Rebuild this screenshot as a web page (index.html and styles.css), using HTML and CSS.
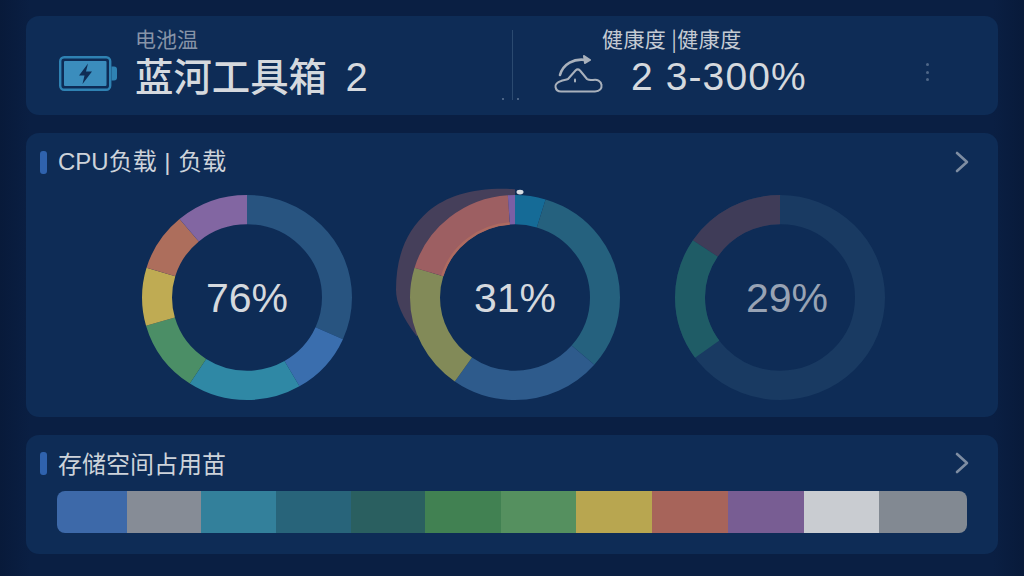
FILE: index.html
```html
<!DOCTYPE html>
<html lang="zh-CN">
<head>
  <meta charset="UTF-8">
  <meta name="viewport" content="width=device-width, initial-scale=1.0">
  <title>蓝河工具箱</title>
  <link rel="stylesheet" href="styles.css">
</head>
<body>
  <section class="card top-card">
    <div class="stat stat-left">
      <svg class="battery" width="58" height="35" viewBox="0 0 58 35">
        <rect x="1.2" y="1.2" width="50" height="32.6" rx="4" fill="none" stroke="#2f82b3" stroke-width="2.4"/>
        <rect x="5" y="5" width="42.5" height="25" rx="1" fill="#3b8dbd"/>
        <path d="M52.5 10.5h2.5a3 3 0 0 1 3 3v8a3 3 0 0 1-3 3h-2.5z" fill="#2f82b3"/>
        <path d="M29 7.5 20 19.5h5.5L23.5 28 33 15.5h-6z" fill="#0f2d55"/>
      </svg>
      <div class="stat-text">
        <div class="stat-label dim">电池温</div>
        <div class="stat-value cjk">蓝河工具箱 <span class="num">2</span></div>
      </div>
    </div>
    <div class="divider"></div>
    <div class="stat stat-right">
      <svg class="cloud" width="49" height="38" viewBox="0 0 49 38" fill="none" stroke="#a9b1bc" stroke-width="2" stroke-linecap="round" stroke-linejoin="round">
        <path d="M7 36.5H41C46 36.5 48 33 47.5 30 47 26 43 24 39 25 36 25 34 25 33 24L26 15.500C24.500 14 23 14 21.500 15.500L14 24C12 25 9 25 7 26 3 27 1 30 1.500 32 2 35 4 36.500 7 36.500Z"/>
        <path d="M6 20C9 9 20 3 32 5" stroke-width="2.6"/>
        <path d="M30 1 36 5 31 8z" fill="#a9b1bc"/>
        <path d="M21 26.500v-2"/>
      </svg>
      <div class="stat-text">
        <div class="stat-label wide">健康度 |健康度</div>
        <div class="stat-value num indent">2 3-300%</div>
      </div>
      <div class="kebab"><i></i><i></i><i></i></div>
    </div>
  </section>

  <section class="card cpu-card">
    <div class="card-head">
      <span class="accent"></span>
      <h2 class="spaced">CPU负载 | 负载</h2>
      <svg class="chevron" width="14" height="22" viewBox="0 0 14 22"><path d="M2 2l10 9-10 9" fill="none" stroke="#7e8da2" stroke-width="2.600" stroke-linecap="round" stroke-linejoin="round"/></svg>
    </div>
    <div class="donuts">
      <div class="donut">
        <svg width="210" height="205" viewBox="0 0 210 210" preserveAspectRatio="none">
          <g transform="rotate(-90 105 105)" fill="none" stroke-width="30">
            <circle cx="105" cy="105" r="90" pathLength="360" stroke="#285480" stroke-dasharray="114 246"/>
            <circle cx="105" cy="105" r="90" pathLength="360" stroke="#3a6eae" stroke-dasharray="36 324" stroke-dashoffset="-114"/>
            <circle cx="105" cy="105" r="90" pathLength="360" stroke="#2f88a5" stroke-dasharray="63 297" stroke-dashoffset="-150"/>
            <circle cx="105" cy="105" r="90" pathLength="360" stroke="#4b8e66" stroke-dasharray="41 319" stroke-dashoffset="-213"/>
            <circle cx="105" cy="105" r="90" pathLength="360" stroke="#bfab53" stroke-dasharray="33 327" stroke-dashoffset="-254"/>
            <circle cx="105" cy="105" r="90" pathLength="360" stroke="#ad6e5c" stroke-dasharray="33 327" stroke-dashoffset="-287"/>
            <circle cx="105" cy="105" r="90" pathLength="360" stroke="#8266a2" stroke-dasharray="40 320" stroke-dashoffset="-320"/>
          </g>
        </svg>
        <span class="pct">76%</span>
      </div>
      <div class="donut">
        <svg width="210" height="205" viewBox="0 0 210 210" preserveAspectRatio="none">
          <path d="M7 145C-8 125-14 110-14 97-14 60-2 35 18 17 38 0 65-8 105-6V17A88 88 0 0 0 17 105Z" fill="#453f5a"/>
          <g transform="rotate(-90 105 105)" fill="none" stroke-width="30">
            <circle cx="105" cy="105" r="90" pathLength="360" stroke="#156b97" stroke-dasharray="17 343"/>
            <circle cx="105" cy="105" r="90" pathLength="360" stroke="#25617e" stroke-dasharray="114 246" stroke-dashoffset="-17"/>
            <circle cx="105" cy="105" r="90" pathLength="360" stroke="#2e5b8c" stroke-dasharray="84 276" stroke-dashoffset="-131"/>
            <circle cx="105" cy="105" r="90" pathLength="360" stroke="#828a58" stroke-dasharray="72 288" stroke-dashoffset="-215"/>
            <circle cx="105" cy="105" r="90" pathLength="360" stroke="#9d5f62" stroke-dasharray="69 291" stroke-dashoffset="-287"/>
            <circle cx="105" cy="105" r="90" pathLength="360" stroke="#7a5fa5" stroke-dasharray="4 356" stroke-dashoffset="-356"/>
            <circle cx="105" cy="105" r="76" pathLength="360" stroke="#ad6a60" stroke-width="2.500" stroke-dasharray="69 291" stroke-dashoffset="-287"/>
          </g>
          <ellipse cx="110" cy="-3" rx="3.500" ry="2.500" fill="#d8dde2"/>
        </svg>
        <span class="pct">31%</span>
      </div>
      <div class="donut faded">
        <svg width="210" height="205" viewBox="0 0 210 210" preserveAspectRatio="none">
          <g transform="rotate(-90 105 105)" fill="none" stroke-width="30">
            <circle cx="105" cy="105" r="90" pathLength="360" stroke="#193a62"/>
            <circle cx="105" cy="105" r="90" pathLength="360" stroke="#1f5c66" stroke-dasharray="70 290" stroke-dashoffset="-234"/>
            <circle cx="105" cy="105" r="90" pathLength="360" stroke="#3f3c58" stroke-dasharray="56 304" stroke-dashoffset="-304"/>
          </g>
        </svg>
        <span class="pct">29%</span>
      </div>
    </div>
  </section>

  <section class="card storage-card">
    <div class="card-head">
      <span class="accent"></span>
      <h2>存储空间占用苗</h2>
      <svg class="chevron" width="14" height="22" viewBox="0 0 14 22"><path d="M2 2l10 9-10 9" fill="none" stroke="#7e8da2" stroke-width="2.600" stroke-linecap="round" stroke-linejoin="round"/></svg>
    </div>
    <div class="bar">
      <span class="seg s1"></span>
      <span class="seg s2"></span>
      <span class="seg s3"></span>
      <span class="seg s4"></span>
      <span class="seg s5"></span>
      <span class="seg s6"></span>
      <span class="seg s7"></span>
      <span class="seg s8"></span>
      <span class="seg s9"></span>
      <span class="seg s10"></span>
      <span class="seg s11"></span>
      <span class="seg s12"></span>
    </div>
  </section>
</body>
</html>
```

FILE: styles.css
```css
* { box-sizing: border-box; }
html, body { height: 100%; }
body { margin: 0; padding: 16px 26px 0; display: flex; flex-direction: column; gap: 18px; background: linear-gradient(90deg, #081a3a, #0a1f43 3%, #0a1f43 97%, #081a3a); overflow: hidden; font-family: "Liberation Sans", "Noto Sans CJK SC", sans-serif; color: #d5d9de; }
.card { background: #0e2c56; border-radius: 13px; }

.top-card { height: 99px; display: flex; }
.stat { display: flex; align-items: flex-end; height: 80px; padding-top: 10px; }
.stat-left { width: 486px; padding-left: 33px; gap: 18px; }
.stat-right { flex: 1; padding-left: 41px; padding-right: 69px; }
.battery { margin-bottom: 5px; flex: none; }
.cloud { margin-bottom: 3px; flex: none; }
.stat-text { display: flex; flex-direction: column; }
.stat-label { font-family: "Noto Sans CJK SC", sans-serif; font-size: 21px; line-height: 24px; height: 26px; color: #c5cbd3; }
.stat-label.dim { color: #8794a8; }
.stat-label.wide { letter-spacing: 0.4px; margin-left: -1px; }
.stat-value { font-size: 38.4px; line-height: 44px; height: 44px; color: #d5d9de; white-space: pre; }
.stat-value.cjk { font-family: "Noto Sans CJK SC", sans-serif; font-weight: 500; }
.stat-value.cjk .num { font-size: 40px; margin-left: 10px; }
.num { font-family: "Liberation Sans", sans-serif; font-weight: 400; }
.indent { margin-left: 28px; font-size: 39px; letter-spacing: 1.1px; padding-top: 3px; }
.divider { width: 1px; height: 70px; margin-top: 14px; background: #2b4a70; position: relative; }
.divider::before, .divider::after { content: ""; position: absolute; bottom: 0; width: 2px; height: 2px; background: #4a6385; }
.divider::before { left: -10px; }
.divider::after { left: 5px; }
.kebab { margin-left: auto; align-self: center; display: flex; flex-direction: column; gap: 4.5px; margin-top: 22px; }
.kebab i { width: 3px; height: 3px; border-radius: 50%; background: #4f6787; }

.cpu-card { height: 284px; padding: 0 14px; }
.storage-card { height: 119px; padding: 0 14px; }
.card-head { display: flex; align-items: center; height: 58px; padding-right: 15px; }
.storage-card .card-head { height: 56px; }
.accent { width: 7px; height: 23px; border-radius: 3px; background: #2f62ad; flex: none; }
.card-head h2 { margin: 0 0 0 11px; font-family: "Noto Sans CJK SC", sans-serif; font-size: 24px; font-weight: 400; line-height: 30px; color: #cdd3da; }
.card-head h2.spaced { font-family: "Liberation Sans", "Noto Sans CJK SC", sans-serif; word-spacing: 1px; }
.chevron { margin-left: auto; }

.donuts { display: grid; grid-template-columns: 268px 265px 210px; padding-left: 102px; margin-top: 4px; }
.donut { width: 210px; height: 205px; display: grid; place-items: center; }
.donut svg { grid-area: 1 / 1; overflow: visible; }
.pct { grid-area: 1 / 1; font-size: 41px; line-height: 48px; color: #d5d9de; }
.faded .pct { color: #98a3b4; margin-left: 14px; }

.bar { display: flex; height: 42px; margin: 0 17px; border-radius: 8px; overflow: hidden; }
.seg { display: block; }
.s1 { width: 70px; background: #3d69a9; }
.s2 { width: 74px; background: #868c96; }
.s3 { width: 75px; background: #33809b; }
.s4 { width: 75px; background: #28647a; }
.s5 { width: 74px; background: #2a5f60; }
.s6 { width: 76px; background: #418152; }
.s7 { width: 75px; background: #55905f; }
.s8 { width: 76px; background: #b8a650; }
.s9 { width: 76px; background: #a7645a; }
.s10 { width: 76px; background: #785d93; }
.s11 { width: 75px; background: #c9ccd1; }
.s12 { width: 88px; background: #828992; }
```
